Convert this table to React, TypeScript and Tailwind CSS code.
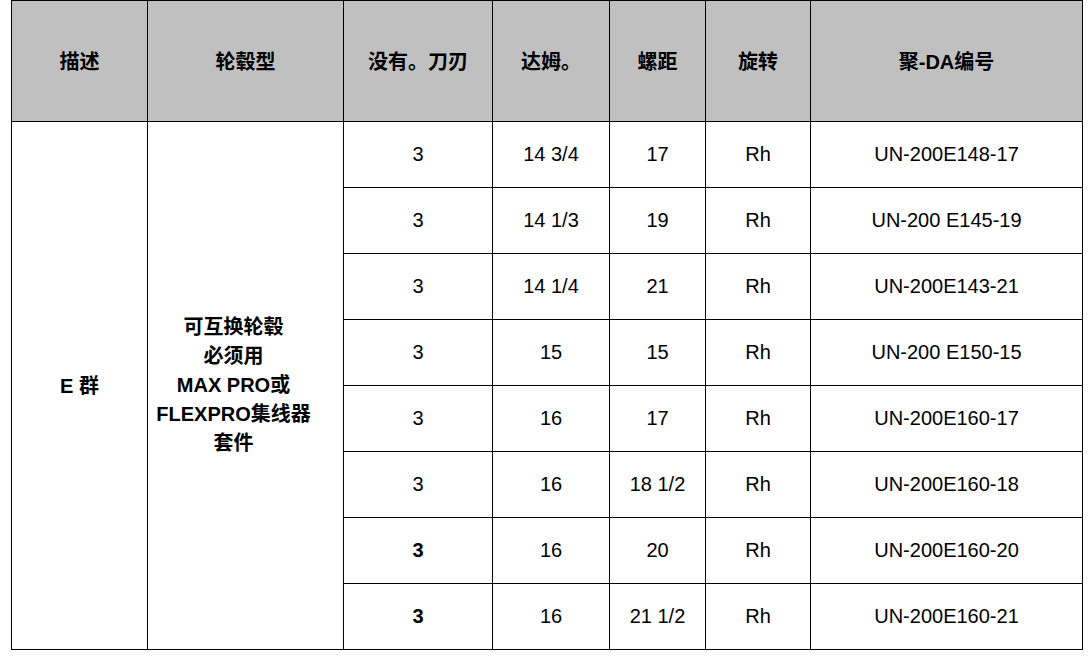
import React from "react";

const rows: { n: string; nBold?: boolean; dam: string; pitch: string; rot: string; part: string }[] = [
  { n: "3", dam: "14 3/4", pitch: "17", rot: "Rh", part: "UN-200E148-17" },
  { n: "3", dam: "14 1/3", pitch: "19", rot: "Rh", part: "UN-200 E145-19" },
  { n: "3", dam: "14 1/4", pitch: "21", rot: "Rh", part: "UN-200E143-21" },
  { n: "3", dam: "15", pitch: "15", rot: "Rh", part: "UN-200 E150-15" },
  { n: "3", dam: "16", pitch: "17", rot: "Rh", part: "UN-200E160-17" },
  { n: "3", dam: "16", pitch: "18 1/2", rot: "Rh", part: "UN-200E160-18" },
  { n: "3", nBold: true, dam: "16", pitch: "20", rot: "Rh", part: "UN-200E160-20" },
  { n: "3", nBold: true, dam: "16", pitch: "21 1/2", rot: "Rh", part: "UN-200E160-21" },
];

const headers = ["描述", "轮毂型", "没有。刀刃", "达姆。", "螺距", "旋转", "聚-DA编号"];

export default function App() {
  return (
    <div
      className="w-[1091px] h-[660px] bg-white text-black"
      style={{ fontFamily: '"Liberation Sans", Arial, "Noto Sans CJK SC", sans-serif' }}
    >
      <div className="ml-[11px] w-fit grid grid-cols-[135px_195px_148px_116px_95px_104px_271px] grid-rows-[120px_repeat(8,65px)] gap-px p-px bg-black text-[20px]">
        {headers.map((h) => (
          <div key={h} className="bg-[#c0c0c0] flex items-center justify-center font-bold pt-[2px]">
            {h}
          </div>
        ))}
        <div className="bg-white row-span-8 col-start-1 row-start-2 flex items-center justify-center font-bold">
          E 群
        </div>
        <div className="bg-white row-span-8 col-start-2 row-start-2 flex items-center justify-center font-bold text-center leading-[29px] pr-6">
          <div>
            可互换轮毂
            <br />
            必须用
            <br />
            MAX PRO或
            <br />
            FLEXPRO集线器
            <br />
            套件
          </div>
        </div>
        {rows.map((r, i) => (
          <React.Fragment key={i}>
            <div className={`bg-white flex items-center justify-center col-start-3 pb-[2px] ${r.nBold ? "font-bold" : ""}`}>{r.n}</div>
            <div className="bg-white flex items-center justify-center pb-[2px]">{r.dam}</div>
            <div className="bg-white flex items-center justify-center pb-[2px]">{r.pitch}</div>
            <div className="bg-white flex items-center justify-center pb-[2px]">{r.rot}</div>
            <div className="bg-white flex items-center justify-center pb-[2px]">{r.part}</div>
          </React.Fragment>
        ))}
      </div>
    </div>
  );
}
